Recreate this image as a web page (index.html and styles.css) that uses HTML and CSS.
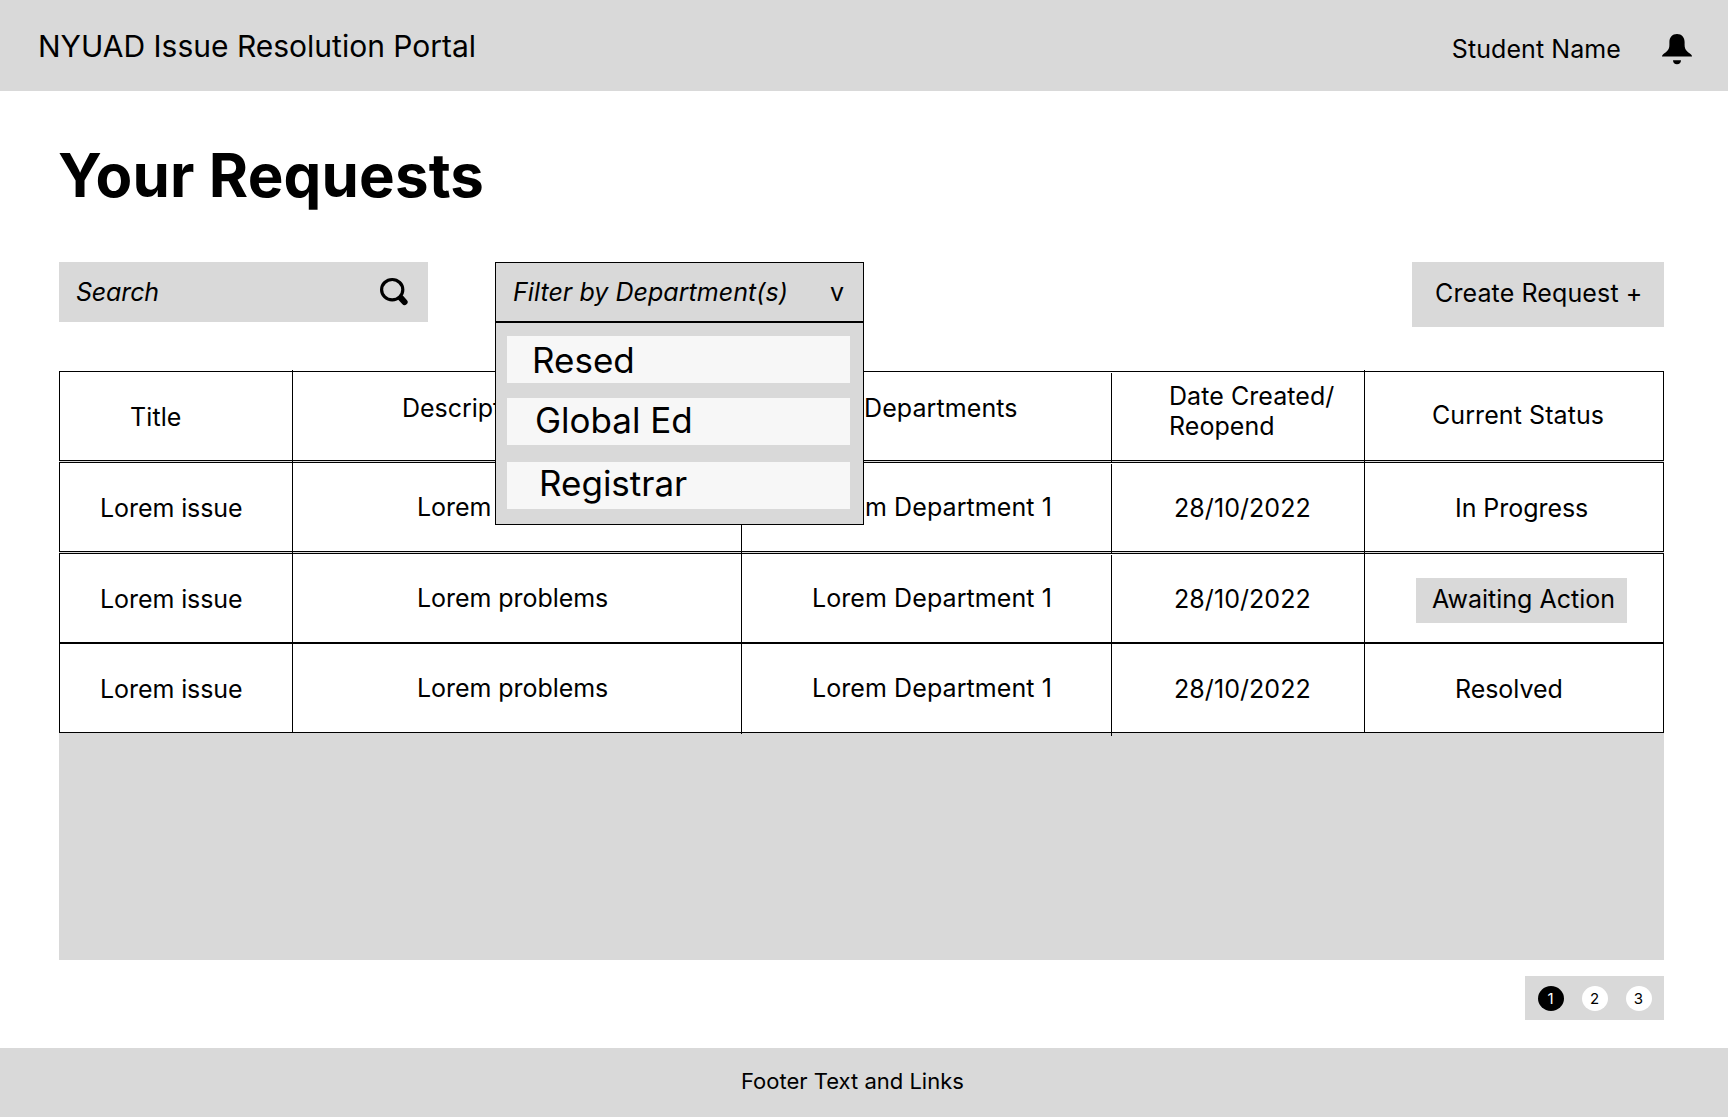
FILE: index.html
```html
<!DOCTYPE html>
<html lang="en">
<head>
<meta charset="utf-8">
<title>NYUAD Issue Resolution Portal</title>
<link rel="stylesheet" href="styles.css">
</head>
<body>
<header class="topbar">
  <div class="brand">NYUAD Issue Resolution Portal</div>
  <div class="user">Student Name</div>
  <svg class="bell" width="30" height="31" viewBox="0 0 30 31"><path d="M15 0C10.300 0 7.400 3.400 7.400 8v2.700C7.400 16.300 4.600 17.500 1.200 20.300.2 21.200 0 21.800 0 22.600h30c0-.8-.2-1.400-1.200-2.300-3.400-2.800-6.200-4-6.200-9.600V8C22.600 3.400 19.700 0 15 0zM11 26.200h8c0 2.400-1.700 4-4 4s-4-1.600-4-4z"/></svg>
</header>
<main class="page">
  <h1 class="heading">Your Requests</h1>
  <div class="toolbar">
    <div class="search">
      <span>Search</span>
      <svg width="28" height="29" viewBox="0 0 28 29"><ellipse cx="12.200" cy="12.700" rx="10.600" ry="10.200" fill="none" stroke="#000" stroke-width="3.200"/><path d="M21 21.200L24.500 25" stroke="#000" stroke-width="6.200" stroke-linecap="round"/></svg>
    </div>
    <div class="filter">
      <div class="filter-head"><span class="filter-label">Filter by Department(s)</span><span class="caret">v</span></div>
      <div class="menu">
        <div class="option resed">Resed</div>
        <div class="option global">Global Ed</div>
        <div class="option registrar">Registrar</div>
      </div>
    </div>
    <div class="create">Create Request +</div>
  </div>
  <section class="table">
    <div class="row head">
      <div class="cell title">Title</div>
      <div class="cell desc">Description</div>
      <div class="cell dept">Departments</div>
      <div class="cell date">Date Created/<br>Reopend</div>
      <div class="cell status">Current Status</div>
    </div>
    <div class="row">
      <div class="cell title">Lorem issue</div>
      <div class="cell desc">Lorem problems</div>
      <div class="cell dept">Lorem Department 1</div>
      <div class="cell date">28/10/2022</div>
      <div class="cell status">In Progress</div>
    </div>
    <div class="row">
      <div class="cell title">Lorem issue</div>
      <div class="cell desc">Lorem problems</div>
      <div class="cell dept">Lorem Department 1</div>
      <div class="cell date">28/10/2022</div>
      <div class="cell status action"><span class="badge">Awaiting Action</span></div>
    </div>
    <div class="row last">
      <div class="cell title">Lorem issue</div>
      <div class="cell desc">Lorem problems</div>
      <div class="cell dept">Lorem Department 1</div>
      <div class="cell date">28/10/2022</div>
      <div class="cell status">Resolved</div>
    </div>
  </section>
  <nav class="pager">
    <span class="dot current">1</span>
    <span class="dot">2</span>
    <span class="dot">3</span>
  </nav>
</main>
<footer class="footer">Footer Text and Links</footer>
</body>
</html>
```
FILE: styles.css
```css
* { box-sizing: border-box; }
body {
  margin: 0;
  height: 1117px;
  display: flex;
  flex-direction: column;
  overflow: hidden;
  background: #fff;
  color: #000;
  font: 25px/30px Inter, "Liberation Sans", sans-serif;
  white-space: nowrap;
}
svg { display: block; flex: none; }

.topbar {
  height: 91px;
  display: flex;
  align-items: flex-start;
  padding: 0 36px 0 38px;
  background: #d9d9d9;
}
.brand { flex: 1; padding-top: 28px; font-size: 30px; line-height: 36px; }
.user { padding-top: 34px; margin-right: 41px; letter-spacing: 0.08px; }
.bell { margin-top: 34px; }

.page { flex: 1; padding: 48px 64px 0 59px; display: flex; flex-direction: column; }
.heading { margin: 0 0 50px -1px; font-size: 60px; line-height: 73px; font-weight: 700; letter-spacing: 0.15px; }

.toolbar { display: flex; align-items: flex-start; height: 109px; }
.search {
  width: 369px;
  height: 60px;
  display: flex;
  justify-content: space-between;
  padding: 15px 20px 0 17px;
  background: #d9d9d9;
  font-style: italic;
  letter-spacing: -0.15px;
}
.filter { position: relative; width: 369px; margin-left: 67px; }
.filter-head {
  height: 60px;
  display: flex;
  justify-content: space-between;
  padding: 14px 19px 0 17px;
  border: 1px solid #000;
  background: #d9d9d9;
}
.filter-label { font-style: italic; letter-spacing: 0.05px; }
.menu {
  position: absolute;
  top: 60px;
  left: 0;
  z-index: 10;
  width: 369px;
  height: 203px;
  padding: 13px 13px 0 11px;
  border: 1px solid #000;
  background: #d9d9d9;
}
.option {
  height: 47px;
  margin-bottom: 15px;
  background: #f7f7f7;
  font-size: 35px;
  line-height: 42px;
}
.resed { padding: 3px 0 0 25px; }
.global { padding: 1px 0 0 28px; margin-bottom: 17px; }
.registrar { padding: 0 0 0 32px; }
.create {
  width: 252px;
  height: 65px;
  margin-left: auto;
  padding: 16px 0 0 23px;
  background: #d9d9d9;
  letter-spacing: 0.12px;
}

.table { height: 589px; background: #d9d9d9; }
.row {
  height: 90px;
  display: grid;
  grid-template-columns: 232px 449px 370px 253px 1fr;
  margin-bottom: 1px;
  border: 1px solid #000;
  background: #fff;
}
.row:nth-child(3) { margin-bottom: 0; }
.cell { position: relative; padding-top: 30px; }
.cell + .cell::before {
  content: "";
  position: absolute;
  top: -2px;
  bottom: -1px;
  left: 0;
  width: 1px;
  background: #000;
}
.cell.date::before { top: 1px; bottom: -2px; }
.last .cell.dept::before { bottom: -2px; }
.last .cell.date::before { top: -1px; bottom: -4px; }
.title { padding-left: 40px; letter-spacing: -0.08px; }
.desc { padding: 29px 0 0 125px; letter-spacing: -0.05px; }
.dept { padding: 29px 0 0 71px; letter-spacing: 0.08px; }
.date { padding-left: 63px; letter-spacing: 0.06px; }
.status { padding-left: 91px; letter-spacing: -0.05px; }
.head .title { padding-left: 70px; letter-spacing: 0.1px; }
.head .desc { padding: 21px 0 0 110px; }
.head .dept { padding: 21px 0 0 123px; letter-spacing: 0.1px; }
.head .date { padding: 9px 0 0 58px; }
.head .status { padding: 28px 0 0 68px; letter-spacing: 0.08px; }
.status.action { padding: 24px 0 0 52px; letter-spacing: 0; }
.badge {
  display: block;
  width: 211px;
  height: 45px;
  padding: 6px 0 0 16px;
  background: #d9d9d9;
}

.pager {
  width: 139px;
  height: 44px;
  display: flex;
  align-self: flex-end;
  gap: 18px;
  margin-top: 16px;
  padding: 10px 0 0 13px;
  background: #d9d9d9;
}
.dot {
  width: 26px;
  height: 25px;
  padding-right: 1px;
  border-radius: 50%;
  background: #fff;
  font-size: 15px;
  line-height: 25px;
  text-align: center;
}
.current { background: #000; color: #fff; }

.footer {
  height: 69px;
  padding: 20px 0 0 741px;
  background: #d9d9d9;
  font-size: 22px;
  line-height: 27px;
}
```
